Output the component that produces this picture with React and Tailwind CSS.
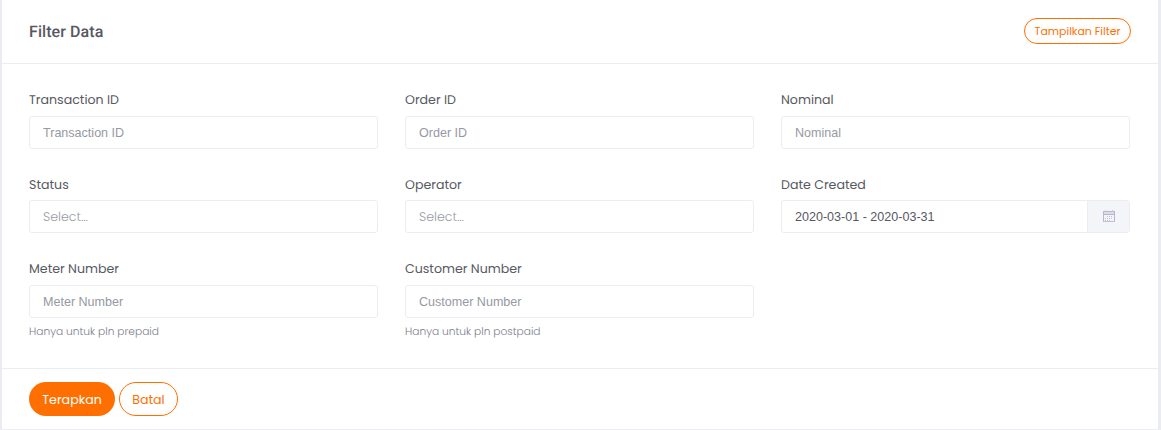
import React from 'react';

const ui = "font-['Poppins','Inter',sans-serif]";
const plain = "font-['Liberation_Sans',Arial,sans-serif]";

function Field({ label, labelClass = 'pt-px', help, children }) {
  return (
    <div className="flex flex-col items-start">
      <label className={`${ui} h-4 text-[12.6px] leading-4 whitespace-nowrap text-[#575962] ${labelClass}`}>{label}</label>
      <div className="mt-2 flex h-[33px] w-full overflow-hidden rounded-[3px] border border-[#ebedf2] bg-white">{children}</div>
      {help && <span className={`${ui} mt-1.5 text-[10.65px] leading-4 font-light whitespace-nowrap text-[#7b7e8a]`}>{help}</span>}
    </div>
  );
}

function Input({ placeholder }) {
  return (
    <input
      placeholder={placeholder}
      className={`${plain} w-full bg-transparent px-[13px] pt-0.5 text-[12.55px] text-[#575962] outline-none placeholder:text-[#9699a2]`}
    />
  );
}

function Select() {
  return <div className={`${ui} flex w-full items-center px-[13px] pt-[3px] text-[12.6px] font-light text-[#999ca6]`}>Select...</div>;
}

function Calendar() {
  return (
    <svg width="12" height="13" viewBox="0 0 12 13" fill="none" shapeRendering="crispEdges">
      <path d="M.5 1.5h11v10H.5z" stroke="#b9b5cf" />
      <path d="M1 2h10v2H1z" fill="#dddbe8" />
      <path d="M1 4.5h10" stroke="#b9b5cf" />
      <path d="M0 11h12v1H0z" fill="#c3c0d6" />
      <path d="M2.5 0v2M9.5 0v2" stroke="#c9c6da" />
      <path d="M4 6h1v1H4zM6 6h1v1H6zM8 6h1v1H8zM2 8h1v1H2zM4 8h1v1H4zM6 8h1v1H6zM8 8h1v1H8zM2 10h1v1H2zM4 10h1v1H4zM6 10h1v1H6z" fill="#c3c0d6" />
    </svg>
  );
}

export default function App() {
  return (
    <div className="h-[430px] w-[1161px] overflow-hidden border-r-[3px] border-b border-l-2 border-[#ebebf2] bg-white [text-rendering:geometricPrecision]">
      <header className="flex h-16 items-center justify-between border-b border-[#ebedf2] pr-[27px] pl-[27px]">
        <h1 className="font-['Roboto',sans-serif] text-base font-medium tracking-[0.08px] text-[#575962]">Filter Data</h1>
        <button className={`${ui} mt-[-2px] flex h-[26px] w-[107px] items-center justify-center rounded-full border border-[#ff6f00] pt-[3px] text-[10.95px] whitespace-nowrap text-[#ff6f00]`}>
          Tampilkan Filter
        </button>
      </header>
      <main className="grid h-[304px] grid-cols-[349px_349px_349px] grid-rows-[84px_85px_auto] gap-x-[27px] pt-7 pl-[27px]">
        <Field label="Transaction ID"><Input placeholder="Transaction ID" /></Field>
        <Field label="Order ID"><Input placeholder="Order ID" /></Field>
        <Field label="Nominal"><Input placeholder="Nominal" /></Field>
        <Field label="Status" labelClass="pt-0.5"><Select /></Field>
        <Field label="Operator" labelClass="pt-0.5"><Select /></Field>
        <Field label="Date Created" labelClass="pt-0.5">
          <input defaultValue="2020-03-01 - 2020-03-31" className={`${plain} min-w-0 flex-1 px-[13px] pt-0.5 text-[12.55px] text-[#575962] outline-none`} />
          <span className="flex w-[42px] items-center justify-center border-l border-[#ebedf2] bg-[#f4f5f8]"><Calendar /></span>
        </Field>
        <Field label="Meter Number" help="Hanya untuk pln prepaid"><Input placeholder="Meter Number" /></Field>
        <Field label="Customer Number" help="Hanya untuk pln postpaid"><Input placeholder="Customer Number" /></Field>
      </main>
      <footer className="flex h-[61px] gap-1 border-t border-[#ebedf2] pt-[13px] pl-[27px]">
        <button className={`${ui} h-[34px] w-[86px] rounded-full bg-[#ff6f00] pt-0.5 text-[12.6px] text-white`}>Terapkan</button>
        <button className={`${ui} h-[34px] w-[59px] rounded-full border border-[#ff6f00] pt-0.5 text-[12.6px] text-[#ff6f00]`}>Batal</button>
      </footer>
    </div>
  );
}
